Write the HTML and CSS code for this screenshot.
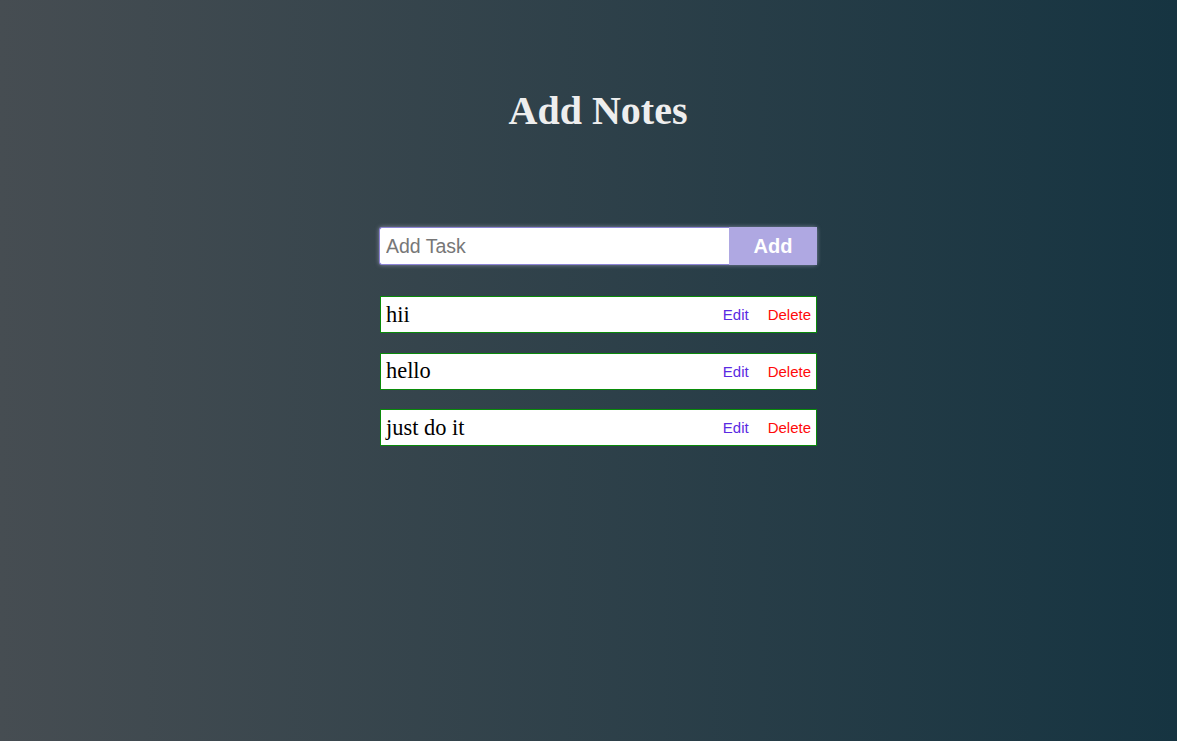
FILE: index.html
```html
<!DOCTYPE html>
<html>
<head>
<meta charset="utf-8">
<link rel="stylesheet" href="styles.css">
</head>
<body>
<div class="page">
  <h1 class="title">Add Notes</h1>
  <div class="form">
    <input class="task-input" type="text" placeholder="Add Task">
    <button class="add-btn">Add</button>
  </div>
  <ul class="list">
    <li class="item"><span class="text">hii</span><span class="actions"><span class="edit">Edit</span><span class="delete">Delete</span></span></li>
    <li class="item"><span class="text">hello</span><span class="actions"><span class="edit">Edit</span><span class="delete">Delete</span></span></li>
    <li class="item"><span class="text">just do it</span><span class="actions"><span class="edit">Edit</span><span class="delete">Delete</span></span></li>
  </ul>
</div>
</body>
</html>
```
FILE: styles.css
```css
html, body {
  margin: 0;
  padding: 0;
  height: 100%;
}
body {
  background: linear-gradient(to right, #464d52, #163441);
  font-family: "Liberation Serif", "Times New Roman", serif;
}
.page {
  width: 438px;
  margin: 0 auto;
  padding: 88px 0 0 19px;
  display: flex;
  flex-direction: column;
  align-items: stretch;
}
.title {
  margin: 0;
  text-align: center;
  font-size: 40px;
  line-height: 46px;
  font-weight: bold;
  color: #eeeeee;
}
.form {
  margin-top: 93px;
  display: flex;
  height: 38px;
  box-shadow: 0 0 4px rgba(200, 200, 230, 0.55);
  border-radius: 3px;
}
.task-input {
  flex: 1;
  min-width: 0;
  box-sizing: border-box;
  height: 38px;
  margin: 0;
  border: 1px solid #8d84d6;
  border-right: none;
  border-radius: 3px 0 0 3px;
  padding: 0 6px;
  font-family: "Liberation Sans", Arial, sans-serif;
  font-size: 19.5px;
  color: #222;
  background: #fff;
  outline: none;
}
.task-input::placeholder {
  color: #777;
}
.add-btn {
  width: 88px;
  height: 38px;
  margin: 0;
  border: none;
  background: #afa8e2;
  color: #ffffff;
  font-family: "Liberation Sans", Arial, sans-serif;
  font-weight: bold;
  font-size: 20px;
  padding: 0;
}
.list {
  list-style: none;
  margin: 31px 0 0 0;
  padding: 0;
  display: flex;
  flex-direction: column;
  gap: 19.5px;
}
.item {
  box-sizing: border-box;
  height: 37px;
  margin-left: 1px;
  background: #fff;
  border: 1px solid #0a8a0a;
  display: flex;
  align-items: center;
  justify-content: space-between;
  padding: 0 5px 0 5px;
}
.text {
  font-size: 22.4px;
  color: #000;
}
.actions {
  display: flex;
  gap: 19px;
  font-family: "Liberation Sans", Arial, sans-serif;
  font-size: 15px;
}
.edit {
  color: #5a2be2;
}
.delete {
  color: #ff0a0a;
}
```
